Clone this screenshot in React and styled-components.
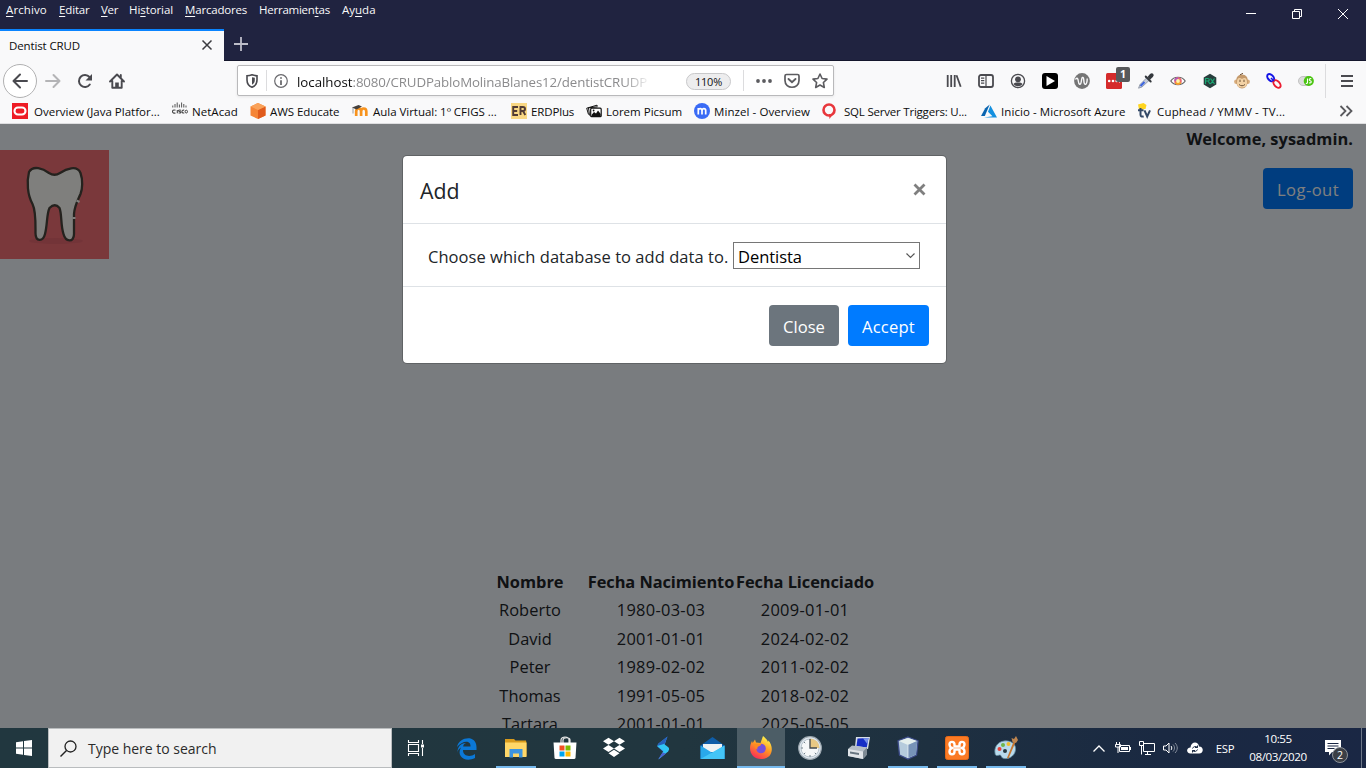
import React from 'react';
import styled, { createGlobalStyle, css } from 'styled-components';

const Global = createGlobalStyle`
  *, *::before, *::after { box-sizing: border-box; }
  body { margin: 0; overflow: hidden; font-family: "Open Sans", "Noto Sans", sans-serif; }
  svg { display: block; flex: none; overflow: visible; }
`;

const Screen = styled.div`
  display: flex; flex-direction: column; width: 1366px; height: 768px; overflow: hidden;
`;

/* ---------- browser title bar ---------- */
const TitleBar = styled.header`
  height: 61px; flex: none; background: #202340; display: flex; justify-content: space-between;
  border-bottom: 1px solid #14162c;
`;
const TitleLeft = styled.div`display: flex; flex-direction: column; justify-content: space-between;`;
const MenuBar = styled.nav`
  display: flex; height: 19px; padding-left: 6px; align-items: center; gap: 12px;
`;
const MenuItem = styled.span`
  width: ${p => p.$w}px; color: #f9f9fa; font-size: 11.5px; line-height: 16px; white-space: nowrap;
  letter-spacing: ${p => p.$ls || 0}px;
  u { text-underline-offset: 2px; text-decoration-thickness: 1px; text-decoration-skip-ink: none; }
`;
const Tabs = styled.div`display: flex; height: 32px; margin-bottom: -1px;`;
const Tab = styled.div`
  width: 224px; background: #f9f9fa; border-top: 2px solid #0a84ff; display: flex; align-items: center;
  justify-content: space-between; padding: 0 12px 2px 9px; font-size: 11.5px; letter-spacing: -0.13px; color: #0c0c0d;
`;
const NewTab = styled.div`width: 34px; display: flex; align-items: center; justify-content: center; padding-bottom: 2px;`;
const WindowButtons = styled.div`display: flex; height: 28px; align-items: center;`;
const WindowButton = styled.div`width: 46px; display: flex; justify-content: center;`;

/* ---------- navigation bar ---------- */
const NavBar = styled.div`
  height: 39px; flex: none; background: #f9f9fa; display: flex; align-items: center; padding-left: 3px;
`;
const NavButton = styled.div`
  width: ${p => p.$w || 32}px; height: 34px; display: flex; align-items: center; justify-content: center; flex: none;
  ${p => p.$round && css`width: 34px; border: 1px solid #b1b1b2; border-radius: 50%; background: #fff;`}
`;
const UrlBar = styled.div`
  margin-left: 104px; width: 597px; height: 31px; background: #fff; border: 1px solid #b9b9bb; border-radius: 2px;
  box-shadow: 0 1px 3px rgba(0,0,0,.08); display: flex; align-items: center; flex: none;
`;
const UrlIcon = styled.div`width: ${p => p.$w}px; display: flex; justify-content: center; flex: none;`;
const UrlRule = styled.div`width: 1px; height: 21px; background: #dcdcde; flex: none;`;
const UrlText = styled.div`
  width: 354px; overflow: hidden; white-space: nowrap; font-size: 13.3px; letter-spacing: -0.13px; color: #8b8b8d;
  padding-top: 2px; flex: none;
  mask-image: linear-gradient(to right, #000 326px, transparent 354px);
  b { font-weight: 400; color: #0c0c0d; letter-spacing: -0.02px; }
`;
const Zoom = styled.div`
  width: 45px; height: 17px; margin: 1px 12px 0 35px; border: 1px solid #c8c8ca; border-radius: 9px; background: #ededee;
  font-size: 11px; letter-spacing: -0.2px; line-height: 15px; text-align: center; color: #111; flex: none;
`;
const Extensions = styled.div`display: flex; align-items: center; margin-left: 104px;`;
const NavRule = styled.div`width: 1px; height: 34px; margin-left: 3px; background: #dcdcde;`;
const ExtensionIcon = styled(NavButton)`position: relative;`;
const ExtBadge = styled.span`
  position: absolute; right: 0; top: 3px; width: 14px; height: 15px; border-radius: 2px; background: #58595b;
  color: #fff; font-size: 10.5px; line-height: 14px; font-weight: 700; text-align: center;
`;

/* ---------- bookmarks ---------- */
const Bookmarks = styled.div`
  height: 24px; flex: none; background: #f9f9fa; border-bottom: 1px solid #dedee0; display: flex; align-items: center; padding: 0 0 1px 12px;
`;
const Bookmark = styled.div`
  width: ${p => p.$w}px; flex: none; display: flex; align-items: center; gap: ${p => p.$gap || 4}px; font-size: 11.5px;
  color: #0c0c0d; white-space: nowrap; letter-spacing: ${p => p.$ls || 0}px;
`;

/* ---------- page ---------- */
const Page = styled.main`
  position: relative; height: 604px; flex: none; overflow: hidden; background: #f2f8ff; color: #212529;
`;
const PageHeader = styled.div`display: flex; justify-content: space-between; height: 438px; padding-right: 13px;`;
const Logo = styled.div`
  width: 109px; height: 109px; margin-top: 26px; background: #f47077;
`;
const Account = styled.div`display: flex; flex-direction: column; align-items: flex-end;`;
const Welcome = styled.div`
  margin-top: 3px; height: 24px; line-height: 24px; font-weight: 700; font-size: 16.4px; letter-spacing: 0.02px; white-space: nowrap;
`;
const Button = styled.button`
  height: 41px; width: ${p => p.$w}px; padding: 2px 0 0; border: 0; border-radius: 4px; color: #fff; font-family: inherit; font-size: 16.6px;
  letter-spacing: ${p => p.$ls || 0}px; background: ${p => (p.$secondary ? '#6c757d' : '#007bff')}; text-align: center; white-space: nowrap;
`;
const LogoutSlot = styled.div`margin-top: 17px;`;
const Table = styled.div`display: grid; grid-template-columns: 112px 146px 138px; column-gap: 2px; margin: 6px 0 0 474px;`;
const Cell = styled.div`
  height: 28.4px; line-height: 28px; text-align: center; white-space: nowrap; font-size: 16.4px; display: flex; justify-content: center;
  font-weight: ${p => (p.$head ? 700 : 400)}; letter-spacing: ${p => p.$ls || 0}px;
`;
const Backdrop = styled.div`
  position: absolute; inset: 0; background: rgba(0,0,0,.5); display: flex; align-items: flex-start; padding: 31px 0 0 402px;
`;
const Modal = styled.section`
  width: 545px; height: 209px; background: #fff; background-clip: padding-box; border: 1px solid rgba(0,0,0,.2); border-radius: 5px;
`;
const ModalHeader = styled.div`
  height: 68px; border-bottom: 1px solid #dee2e6; display: flex; align-items: center; justify-content: space-between; padding: 0 20px 0 17px;
`;
const ModalTitle = styled.h5`margin: 0; padding-top: 2px; font-weight: 400; font-size: 21.3px; line-height: 30px;`;
const ModalBody = styled.div`
  height: 63px; border-bottom: 1px solid #dee2e6; display: flex; align-items: center; padding-left: 25px; font-size: 16.5px;
`;
const ModalLabel = styled.label`width: 305px; white-space: nowrap; padding-top: 2px; letter-spacing: 0.045px;`;
const Select = styled.div`
  width: 187px; height: 27px; border: 1px solid #767676; color: #000; display: flex; align-items: center; justify-content: space-between;
  padding: 2px 4px 0 4px; letter-spacing: -0.04px;
`;
const ModalFooter = styled.div`display: flex; justify-content: flex-end; gap: 9px; padding: 18px 17px 0 0;`;

/* ---------- taskbar ---------- */
const Taskbar = styled.footer`
  height: 40px; flex: none; display: flex; background: linear-gradient(90deg, #21373f 0%, #21363f 50%, #1e3040 68%, #1a2942 85%, #1a2744 100%);
`;
const Start = styled.div`width: 48px; display: flex; align-items: center; justify-content: center;`;
const Search = styled.div`
  width: 344px; background: #f1f1f1; border: 1px solid #b9bcbe; display: flex; align-items: center; gap: 11px; padding-left: 11px;
  font-size: 14px; letter-spacing: -0.02px; color: #2b2b2b;
`;
const Task = styled.div`
  width: 48px; margin-right: 1px; flex: none; display: flex; align-items: center; justify-content: center;
  background: ${p => (p.$active ? '#4c5d66' : 'transparent')};
  ${p => p.$active && css`box-shadow: inset 0 -2px 0 #76b9ed;`}
  ${p => p.$running && css`background: linear-gradient(#76b9ed, #76b9ed) center bottom / 40px 2px no-repeat;`}
`;
const TaskViewButton = styled(Task)`margin-right: 3px;`;
const Tray = styled.div`margin-left: auto; display: flex; align-items: center; color: #fff;`;
const TrayIcon = styled.div`width: ${p => p.$w || 24}px; display: flex; justify-content: center;`;
const Language = styled.div`width: 36px; text-align: center; font-size: 11.3px; letter-spacing: -0.3px;`;
const Clock = styled.div`width: 70px; text-align: center; font-size: 11.6px; letter-spacing: -0.4px; line-height: 18px; white-space: nowrap; padding-bottom: 1px;`;
const Notice = styled.div`position: relative; width: 48px; padding-right: 8px; display: flex; justify-content: center;`;
const NoticeBadge = styled.span`
  position: absolute; left: 19px; top: 7px; width: 16px; height: 16px; border-radius: 50%; border: 1px solid #8d939a; background: #3b3f46;
  font-size: 10.5px; line-height: 14px; text-align: center;
`;
const ShowDesktop = styled.div`width: 5px; height: 40px; border-left: 1px solid #6d7788;`;

const Svg = ({ s = 16, w, h, vb, children, ...rest }) => (
  <svg width={w || s} height={h || s} viewBox={vb || `0 0 ${w || s} ${h || s}`} fill="none" {...rest}>{children}</svg>
);
const ink = '#4a4a4f';

const extensions = [
  <Svg><path d="M1.700 2v12M5.200 2v12M8.700 2v12M10.500 2.200l4.200 11.600" stroke={ink} strokeWidth="1.800" /></Svg>,
  <Svg><rect x="1" y="2" width="14" height="12" rx="2" stroke={ink} strokeWidth="1.800" /><path d="M8 2v12M3 5.200h3.300M3 7.700h3.300M3 10.200h3.300" stroke={ink} strokeWidth="1.200" /></Svg>,
  <Svg><circle cx="8" cy="8" r="6.600" stroke={ink} strokeWidth="1.300" /><circle cx="8" cy="6.300" r="2.900" fill={ink} /><path d="M3.500 11c1-1.700 2.500-1.600 4.500-1.600s3.500-.1 4.500 1.600c-2 3-7 3-9 0z" fill={ink} /></Svg>,
  <Svg><rect width="16" height="16" rx="3" fill="#000" /><path d="M4.500 3l8.500 5-8.500 5z" fill="#fff" /></Svg>,
  <Svg><circle cx="8" cy="8" r="7.900" fill="#757575" /><path d="M1.500 6.500C3 4 4 5.500 4.300 8c.3 3.500 2.300 5 3 .5.400-3.500 1-4.500 1.700-4 1.200.5.500 4 1.300 5.800.8 2 2 1 2.500-1 .3-1.300.4-2 .4-3.800" stroke="#f9f9fa" strokeWidth="1.400" /></Svg>,
  <Svg><rect y="0" width="16" height="16" rx="1.500" fill="#d52b2b" /><circle cx="3.200" cy="8" r="1.300" fill="#fff" /><circle cx="7" cy="8" r="1.300" fill="#fff" /><circle cx="10.700" cy="8" r="1.300" fill="#fff" /><path d="M13.500 6.500v3" stroke="#fff" /></Svg>,
  <Svg><path d="M9 4.500L2 11.500l-1.500 3.700L4 14l7.500-7z" fill="#c4cbd9" stroke="#8890a0" strokeWidth=".8" /><path d="M6.500 9L2.500 13" stroke="#3f66e0" strokeWidth="2" /><path d="M7.700 3.500l5 5" stroke="#34383d" strokeWidth="1.900" strokeLinecap="round" /><path d="M9.500 4L12 1q2-1.500 3.300 0 1 1.500-.5 3L12 6.700z" fill="#34383d" /></Svg>,
  <Svg><path d="M.8 8C4 3 12 3 15.200 8 12 13 4 13 .8 8z" fill="#fff" stroke="#666" strokeWidth="1.200" /><circle cx="8" cy="8" r="3.800" fill="#ea6a72" /><path d="M8 8V4.200A3.800 3.800 0 0 0 4.200 8z" fill="#b35bb8" /><path d="M8 8l3.500 2A4 4 0 0 1 5 10.300z" fill="#f5a623" /><circle cx="8" cy="8" r="1.900" fill="#fff3a8" /></Svg>,
  <Svg><path d="M8 .8l6.300 3.600v7.200L8 15.200l-6.300-3.600V4.400z" fill="#283e3c" /><path d="M3.500 11V5.500h2.300c2 0 2 2.500 0 2.500H3.500M6 8l2 3M8.500 5.500l4 5.500M12.500 5.500l-4 5.500" stroke="#1ba873" strokeWidth="1.200" /></Svg>,
  <Svg><circle cx="2.300" cy="8.800" r="2.200" fill="#d9ad7c" /><circle cx="13.700" cy="8.800" r="2.200" fill="#d9ad7c" /><path d="M8 1.500c4 0 6 3 5.800 7-.2 4-2.500 7-5.800 7s-5.600-3-5.800-7C2 4.500 4 1.500 8 1.500z" fill="#c49a6c" /><path d="M3 9c0-5 3-4.500 5-3 2-1.500 5-2 5 3s-2 5.500-5 5.500S3 14 3 9z" fill="#f3d2a5" /><path d="M6 6.700v2.300M10 6.700v2.300M5 11.500c2 1.700 4 1.700 6 0M6 1.800L9 .3" stroke="#6f5439" strokeWidth="1" /></Svg>,
  <Svg><ellipse cx="4.700" cy="4.700" rx="2.700" ry="4.200" transform="rotate(-42 4.700 4.700)" stroke="#1414e6" strokeWidth="2" /><ellipse cx="11" cy="11" rx="2.700" ry="4.500" transform="rotate(-42 11 11)" stroke="#ec1d31" strokeWidth="2" /><path d="M5 5l3 3" stroke="#1414e6" strokeWidth="1.600" /></Svg>,
  <Svg><rect x=".5" y="3.500" width="14" height="9" rx="4.500" fill="#dcdcdc" stroke="#c2c2c2" /><circle cx="10.800" cy="8" r="5.100" fill="#4bc512" /><path d="M9.500 5.500v4c0 1-1 1-1.600.7M13.300 5.800c-2.500-.7-2.500 1.500-1 2 1.700.5 1 2.800-1.200 2" stroke="#fff" strokeWidth="1.100" /></Svg>,
];

const bookmarks = [
  { t: 'Overview (Java Platfor...', w: 160, gap: 6, ls: 0, i: <Svg><rect width="16" height="16" fill="#ee1c25" /><rect x="2.500" y="4.500" width="11" height="7" rx="3.500" stroke="#fff" strokeWidth="2.100" /></Svg> },
  { t: 'NetAcad', w: 78, ls: 0.05, i: <Svg><path d="M.8 2.500v2M3 1v3.500M5.200-.5v5M7.400 1.500v3M9.600-.5v5M11.800 1v3.500M14 2.500v2" stroke="#555" strokeWidth="1" /><path d="M3.500 7.300C1.300 6.300.5 7.800.5 8.500c0 1.500 1.500 2 3 1.400M5.300 7v3.200M9 7.300c-3-.8-3 1-1.300 1.200 2 .4 1 2-1 1.400M12.200 7.300c-3-1-3 3.500 0 2.600" stroke="#444" strokeWidth="1.100" /><ellipse cx="14.300" cy="8.600" rx="1.200" ry="1.400" stroke="#444" /></Svg> },
  { t: 'AWS Educate', w: 102, ls: -0.06, i: <Svg><path d="M8 0l7.500 3.500v9L8 16 .5 12.500v-9z" fill="#f58536" /><path d="M8 7l7.500-3.500v9L8 16z" fill="#e05b1c" /><path d="M8 0l7.500 3.500L8 7 .5 3.500z" fill="#f9a25a" /></Svg> },
  { t: 'Aula Virtual: 1º CFIGS ...', w: 159, gap: 5, ls: -0.03, i: <Svg><path d="M4.200 13V8.500c0-4 4.900-4 4.900 0V13M9.100 8.500c0-4 5.200-4 5.200 0V13" stroke="#f7931e" strokeWidth="2.700" /><path d="M0 4.500L6.500 2l3.500 1.500L4.500 6.500z" fill="#45403d" /><path d="M1 4.500v6" stroke="#777" strokeWidth=".7" /></Svg> },
  { t: 'ERDPlus', w: 75, ls: -0.15, i: <Svg><rect width="16" height="16" fill="#f8d784" /><path d="M7 4H2.200v8H7M2.200 8h4M9.500 12V4h2.300c3 0 3 4 0 4H9.500M12 8l2.300 4" stroke="#503b35" strokeWidth="1.900" /></Svg> },
  { t: 'Lorem Picsum', w: 108, ls: 0, i: <Svg><path d="M2.500 11.500L.7 5.200 11 2.200l.5 1" stroke="#111" strokeWidth="1" /><path d="M3.500 12.500L2.500 4.800l9-1" stroke="#111" strokeWidth="1" /><rect x="4.700" y="5.200" width="10.500" height="8.500" rx="1" fill="#fff" stroke="#111" strokeWidth="1.200" /><path d="M5.500 12l2.500-3 2 1.500 2-3 2.700 3.500v2H5.500z" fill="#111" /><circle cx="7.600" cy="7.500" r=".9" fill="#111" /></Svg> },
  { t: 'Minzel - Overview', w: 127, ls: 0.08, i: <Svg><circle cx="8" cy="8" r="8" fill="#3a6bf5" /><path d="M4.300 11.500V5M4.300 7.500c0-2.600 3.700-2.600 3.700 0v4M8 7.500c0-2.600 3.700-2.600 3.700 0v4" stroke="#fff" strokeWidth="1.700" /></Svg> },
  { t: 'SQL Server Triggers: U...', w: 160, gap: 7, ls: -0.21, i: <Svg><circle cx="8" cy="7" r="5.500" stroke="#e8373c" strokeWidth="2.600" /><path d="M8 11l.5 5 3.500-5z" fill="#e8373c" /></Svg> },
  { t: 'Inicio - Microsoft Azure', w: 156, ls: 0.07, i: <Svg><path d="M8.700 1.500L4.200 5.300 0 13h3.800z" fill="#0a65b0" /><path d="M9.400 2.500L7 8.700l4.500 4.600L3 14.500h13z" fill="#1490df" /></Svg> },
  { t: 'Cuphead / YMMV - TV...', w: 202, ls: 0.18, i: <Svg><path d="M1 1.500L6.500 0l3 2-1 4-6.500.5z" fill="#ffd51f" /><path d="M3.500 5v6.500c0 2 1 2.400 3.200 1.900M1 7.300h5.500M7.500 7.300l2.700 6.200 2.800-6.200" stroke="#344a68" strokeWidth="2" /></Svg> },
];

const tasks = [
  { o: 'running', i: <Svg w={22} h={20}><path d="M0 2.500V1h9l1.500 1.500H21l.5 2.500v13H0z" fill="#d99b1c" /><path d="M0 4.500h21.500V19H0z" fill="#ffd768" /><path d="M4.500 19.500V11h13v8.500H14V15.500H8v4z" fill="#3d94df" /></Svg> },
  { i: <Svg w={24} h={24}><path d="M8 7V4c0-4 8-4 8 0v3M10 7V4c0-3 7-3 7 0v3" stroke="#e8e8e8" strokeWidth="1.200" /><path d="M.5 6.500h23L22.500 22q-.2 1-1.500 1H3q-1.300 0-1.500-1z" fill="#fff" /><path d="M6.500 9.500h5v5h-5z" fill="#f25022" /><path d="M12.500 9.500h5v5h-5z" fill="#7fba00" /><path d="M6.500 15.500h5v5h-5z" fill="#00a4ef" /><path d="M12.500 15.500h5v5h-5z" fill="#ffb900" /></Svg> },
  { i: <Svg w={24} h={22}><path d="M6.500.8L12 4.300 6.500 7.800 1 4.300zM17.500.8L23 4.300l-5.500 3.500L12 4.300zM6.500 8l5.500 3.500L6.500 15 1 11.500zM17.500 8l5.500 3.500-5.500 3.500-5.500-3.500zM12 12.700l5.500 3.500L12 20l-5.500-3.800z" fill="#fff" /></Svg> },
  { i: <Svg w={14} h={24}><path d="M11.500.5L2.500 7.500Q.5 9.500 2.500 11.500l5 4.500h5L8 10.500z" fill="#3b8bea" /><path d="M11.500.5L2.500 7.500q-1.500 2 0 4L8.500 8z" fill="#245fbb" /><path d="M1 10l6.500 5-5 8.500 9-7.500q3-3 .5-5L8 8z" fill="#31c5f4" /><path d="M6.500 16.500l-4.500 7 8-6z" fill="#4c60cf" /></Svg> },
  { i: <Svg w={25} h={23}><path d="M.5 8.500L12.500 0l12 8.500V22H.5z" fill="#0f5da8" /><path d="M3 7h19v8H3z" fill="#eef2f4" /><path d="M.5 8.500L12.500 16l12-7.500V22H.5z" fill="#29a8ea" /><path d="M.5 22L24.500 8.500V22z" fill="#44c5f7" /></Svg> },
  { o: 'active', i: <Svg w={24} h={24}><defs><linearGradient id="fox" x1="18" y1="2" x2="6" y2="23" gradientUnits="userSpaceOnUse"><stop stopColor="#fff14a" /><stop offset=".45" stopColor="#ff9524" /><stop offset="1" stopColor="#fb245c" /></linearGradient></defs><path d="M1 12c0-3 1-5 2-7l.7 2L6 3.500 7 6.500l4.500.5L14 0c2 2 4 3 5 6l.5-1.500c6 7 4 18.500-7.500 18.500C5.500 23 1 18.500 1 12z" fill="url(#fox)" /><circle cx="12" cy="12.500" r="4.800" fill="#7650dc" /><path d="M5 8l6.500-.5c1 0 1 1.500-1 2.500-2 .5-2.500 1.500-2 3.500-1-.5-3.500-2-3.500-5.500z" fill="#ff8b20" /></Svg> },
  { i: <Svg w={24} h={24}><circle cx="12" cy="12" r="11.300" fill="#dce5ed" stroke="#9da8b0" strokeWidth="1.200" /><circle cx="12" cy="12" r="9" fill="#f6f8f9" stroke="#aebbc4" strokeWidth=".8" /><path d="M12 12V2.500A9.500 9.500 0 0 1 21.500 12z" fill="#e8c884" /><path d="M12 3v9h7" stroke="#40484f" strokeWidth="1.300" /><path d="M12 19v2M3 12h2M6 18l1.200-1.200M18 18l-1.200-1.200M6 6l1.200 1.200" stroke="#71808b" /></Svg> },
  { i: <Svg w={24} h={24}><path d="M9 1l14 0-2 12-13-2z" fill="#d7dfe7" /><path d="M10.500 2.500l11-.5-1.700 9.500L9.500 10z" fill="#162ec5" /><path d="M16 2.200l5.500-.2-1.200 6z" fill="#7893e8" /><path d="M1 13l4-3.500 15 2v7l-4 4.500-15-3z" fill="#b4bdc5" /><path d="M1 13l15 2.500V23L1 20z" fill="#e0e4e8" /><path d="M16 15.500l4-4v7L16 23z" fill="#7e8a94" /><path d="M3 15.500l9 1.500v2l-9-1.500z" fill="#677580" /></Svg> },
  { o: 'running', i: <Svg w={22} h={24}><path d="M11 1l10 4-1.500 14L11 23l-8.500-4L1 5z" fill="#b5cbdc" stroke="#3e4d8b" strokeWidth="1.300" /><path d="M1.800 5L11 2l9.200 3L11 9z" fill="#e4efed" /><path d="M11 9l9.200-4L19 18.500 11 22z" fill="#7793b7" /><path d="M11 9v13" stroke="#eff6f8" strokeWidth=".7" /></Svg> },
  { o: 'running', i: <Svg w={24} h={24}><rect x=".5" y=".5" width="23" height="23" rx="2" fill="#fb7a24" stroke="#e76a18" /><path d="M9.500 8.500C9.500 5 4.500 5 4.500 8.300c0 2 1.200 3.700 3 3.700-1.800 0-3 1.700-3 3.700 0 3.300 5 3.300 5 0V13.500h5v2.200c0 3.300 5 3.300 5 0 0-2-1.200-3.700-3-3.700 1.800 0 3-1.700 3-3.700 0-3.300-5-3.300-5 .2v2h-5z" stroke="#fff" strokeWidth="2.400" strokeLinejoin="round" /></Svg> },
  { o: 'running', i: <Svg w={24} h={24}><path d="M10 5C3 6 0 12 1 17c0 4 4 2 5 2s1 1.500 2.500 3c4 2 12-.5 13-8 1-6-5-10-11.500-9z" fill="#b9daec" stroke="#618a9e" strokeWidth=".8" /><circle cx="5.500" cy="13" r="2" fill="#e8413a" /><circle cx="9" cy="9" r="2" fill="#6db64b" /><circle cx="14.500" cy="8" r="2" fill="#f1bc2e" /><circle cx="11" cy="15" r="2" fill="#263941" /><path d="M20 4.500l-7 17.500 1.500.5L22 5z" fill="#c67831" /><path d="M17.500 2L20 3l2-3 2 4-2 3-3.500-1z" fill="#bd8550" /></Svg> },
];

const rows = [
  ['Roberto', '1980-03-03', '2009-01-01'], ['David', '2001-01-01', '2024-02-02'], ['Peter', '1989-02-02', '2011-02-02'],
  ['Thomas', '1991-05-05', '2018-02-02'], ['Tartara', '2001-01-01', '2025-05-05'],
];

export default function App() {
  return (
    <Screen>
      <Global />
      <TitleBar>
        <TitleLeft>
          <MenuBar>
            <MenuItem $w={41} $ls={0.1}><u>A</u>rchivo</MenuItem>
            <MenuItem $w={30} $ls={-0.15}><u>E</u>ditar</MenuItem>
            <MenuItem $w={16} $ls={-0.3}><u>V</u>er</MenuItem>
            <MenuItem $w={44} $ls={-0.08}>Hi<u>s</u>torial</MenuItem>
            <MenuItem $w={62} $ls={-0.18}><u>M</u>arcadores</MenuItem>
            <MenuItem $w={71} $ls={-0.24}>Herramien<u>t</u>as</MenuItem>
            <MenuItem $w={34}>Ay<u>u</u>da</MenuItem>
          </MenuBar>
          <Tabs>
            <Tab>Dentist CRUD<Svg s={10}><path d="M.5.5l9 9m0-9l-9 9" stroke="#3c3c40" strokeWidth="1.500" /></Svg></Tab>
            <NewTab><Svg s={14}><path d="M7 0v14M0 7h14" stroke="#bdbdc9" strokeWidth="1.800" /></Svg></NewTab>
          </Tabs>
        </TitleLeft>
        <WindowButtons>
          <WindowButton><Svg s={10}><path d="M0 4.500h10" stroke="#fff" /></Svg></WindowButton>
          <WindowButton><Svg s={10}><path d="M.5 2.500h7v7h-7zM2.500 2.500v-2h7v7h-2" stroke="#fff" /></Svg></WindowButton>
          <WindowButton><Svg s={10}><path d="M0 0l10 10M10 0L0 10" stroke="#fff" /></Svg></WindowButton>
        </WindowButtons>
      </TitleBar>

      <NavBar>
        <NavButton $round><Svg><path d="M15 8H1.500M8 1.500L1.500 8 8 14.500" stroke={ink} strokeWidth="2" strokeLinecap="round" strokeLinejoin="round" /></Svg></NavButton>
        <NavButton><Svg><path d="M1 8h13.500M8.500 2l6 6-6 6" stroke="#b4b4b6" strokeWidth="2" strokeLinecap="round" strokeLinejoin="round" /></Svg></NavButton>
        <NavButton><Svg><path d="M12.800 11.500A6 6 0 1 1 12.500 4" stroke={ink} strokeWidth="2" strokeLinecap="round" /><path d="M15 1v6.500H8.500z" fill={ink} /></Svg></NavButton>
        <NavButton><Svg><path d="M1 8.500l7-7 7 7M3.300 8v6.700h9.400V8M11.800 2v3" stroke={ink} strokeWidth="1.900" strokeLinecap="round" strokeLinejoin="round" /><path d="M6.200 14v-4.500h3.600V14z" fill={ink} /></Svg></NavButton>
        <UrlBar>
          <UrlIcon $w={28}><Svg w={12} h={14}><path d="M1 1.800Q3.500 1.600 6 .8q2.500.8 5 1V6c0 3.500-1.800 6-5 7.200C2.800 12 1 9.500 1 6z" stroke={ink} strokeWidth="1.600" /><path d="M6 3.200v7.500c2-1 2.800-2.500 2.800-4.700V3.800z" fill={ink} /></Svg></UrlIcon>
          <UrlRule />
          <UrlIcon $w={28}><Svg s={14}><circle cx="7" cy="7" r="6.300" stroke="#69696d" strokeWidth="1.200" /><path d="M7 6.200V11M7 3.200v1.500" stroke="#59595d" strokeWidth="1.600" /></Svg></UrlIcon>
          <UrlIcon $w={2} />
          <UrlText><b>localhost</b>:8080/CRUDPabloMolinaBlanes12/dentistCRUDP</UrlText>
          <Zoom>110%</Zoom>
          <UrlRule />
          <UrlIcon $w={40}><Svg w={16} h={4}><circle cx="2" cy="2" r="1.900" fill="#5c5c60" /><circle cx="8" cy="2" r="1.900" fill="#5c5c60" /><circle cx="14" cy="2" r="1.900" fill="#5c5c60" /></Svg></UrlIcon>
          <UrlIcon $w={16}><Svg><path d="M2.500 1.500h11q1.500 0 1.500 1.500v4.500c0 9-14 9-14 0V3q0-1.500 1.500-1.500z" stroke="#5c5c60" strokeWidth="1.700" /><path d="M4.500 6L8 9.300 11.500 6" stroke="#5c5c60" strokeWidth="1.900" strokeLinecap="round" /></Svg></UrlIcon>
          <UrlIcon $w={40}><Svg><path d="M8 1l2.100 4.500 4.900.6-3.600 3.400.9 5L8 12l-4.300 2.500.9-5L1 6.100l4.900-.6z" stroke="#5c5c60" strokeWidth="1.600" strokeLinejoin="round" /></Svg></UrlIcon>
        </UrlBar>
        <Extensions>
          {extensions.map((icon, i) => <ExtensionIcon key={i}>{icon}{i === 5 && <ExtBadge>1</ExtBadge>}</ExtensionIcon>)}
          <NavRule />
          <NavButton $w={41}><Svg w={12} h={12}><path d="M0 1h12M0 6h12M0 11h12" stroke={ink} strokeWidth="1.900" /></Svg></NavButton>
        </Extensions>
      </NavBar>

      <Bookmarks>
        {bookmarks.map(b => <Bookmark key={b.t} $w={b.w} $gap={b.gap} $ls={b.ls}>{b.i}{b.t}</Bookmark>)}
        <Svg w={14} h={12}><path d="M1.500 1l5 5-5 5M7.500 1l5 5-5 5" stroke="#5a5a5e" strokeWidth="1.800" /></Svg>
      </Bookmarks>

      <Page>
        <PageHeader>
          <Logo>
            <Svg s={109}>
              <ellipse cx="56" cy="91" rx="27" ry="3" fill="#e76870" />
              <path d="M29 22C33 15 43 18.500 49 23Q54.500 26.500 60 23C66 19 77 14.500 80.500 23c2.500 7 2 16 0 21-3 7-6 12-6.500 20v20c0 9-8.500 8-10.500 0-3-9-1.500-20-4-26q-4.500-5.500-10 0c-3 6-2 17-4.500 26-2 8-9.500 8-9.500-1 0-10 .5-22-3-29-5-9-6-22-3.500-32z" fill="#fffffa" stroke="#48443c" strokeWidth="2.300" />
              <path d="M76.500 50.500l3 1.500M72.500 68h3" stroke="#fffffa" strokeWidth="2" />
            </Svg>
          </Logo>
          <Account>
            <Welcome>Welcome, sysadmin.</Welcome>
            <LogoutSlot><Button $w={90} $ls={0.45}>Log-out</Button></LogoutSlot>
          </Account>
        </PageHeader>
        <Table>
          <Cell $head>Nombre</Cell><Cell $head $ls={-0.06}>Fecha Nacimiento</Cell><Cell $head $ls={-0.06}>Fecha Licenciado</Cell>
          {rows.flatMap((r, i) => r.map((c, j) => <Cell key={`${i}-${j}`} $ls={j ? 0.3 : 0.05}>{c}</Cell>))}
        </Table>
        <Backdrop>
          <Modal>
            <ModalHeader>
              <ModalTitle>Add</ModalTitle>
              <Svg w={13} h={12}><path d="M1.500 .5l10 10M11.500 .5l-10 10" stroke="#7f7f7f" strokeWidth="2.800" /></Svg>
            </ModalHeader>
            <ModalBody>
              <ModalLabel>Choose which database to add data to.</ModalLabel>
              <Select>Dentista<Svg w={9} h={6}><path d="M.5.5l4 4 4-4" stroke="#555" strokeWidth="1.200" /></Svg></Select>
            </ModalBody>
            <ModalFooter><Button $secondary $w={70}>Close</Button><Button $w={81} $ls={0.2}>Accept</Button></ModalFooter>
          </Modal>
        </Backdrop>
      </Page>

      <Taskbar>
        <Start><Svg><path d="M0 2.200L7 1.200V7.500H0zM8 1.100L16 0v7.500H8zM0 8.500h7v6.300l-7-1zM8 8.500h8V16l-8-1.100z" fill="#fff" /></Svg></Start>
        <Search><Svg w={17} h={17}><circle cx="10.500" cy="6.500" r="5.500" stroke="#222" strokeWidth="1.300" /><path d="M6.500 10.500L.5 16.500" stroke="#222" strokeWidth="1.400" /></Svg>Type here to search</Search>
        <TaskViewButton><Svg><path d="M.5 0v2.500h10V0M.5 16v-2.500h10V16M.5 4.500h10v7H.5zM14.500 0v4M14.500 8v8" stroke="#fff" strokeWidth="1.100" /><path d="M13 4.500h3v3h-3z" fill="#fff" /></Svg></TaskViewButton>
        <Task><Svg w={20} h={21}><path d="M0 9C2-1 19-4 19.500 9v3H6c0 7 8 7 12 4v4C8 25-1 18 4 9.500 1.500 11 .5 13 .5 15 .2 8 5 4.500 9 5 6.500 6 6.300 7.500 6.200 8.500h7.300C14 1.500 5 2.500 0 9z" fill="#0b78d7" /></Svg></Task>
        {tasks.map((t, i) => <Task key={i} $running={t.o === 'running'} $active={t.o === 'active'}>{t.i}</Task>)}
        <Tray>
          <TrayIcon><Svg w={12} h={7}><path d="M.5 6.500l5.500-5.500 5.500 5.500" stroke="#fff" strokeWidth="1.300" /></Svg></TrayIcon>
          <TrayIcon><Svg w={16} h={12}><path d="M4.500 3.500h10v6h-10zM15.500 5v3" stroke="#fff" /><path d="M6 5h7v3H6z" fill="#fff" /><path d="M1.500 0v2M4.500 0v2M.5 2.500h5v2.500h-5zM3 5v6" stroke="#fff" /></Svg></TrayIcon>
          <TrayIcon><Svg w={16} h={14}><path d="M4.500 2.500h11v8h-11zM8.500 10.500v3M6 13.500h6M.5.500h4v4h-4zM2.500 4.500v9" stroke="#fff" /></Svg></TrayIcon>
          <TrayIcon><Svg w={16} h={12}><path d="M.5 4h2.500l3-3v10L3 8H.5z" stroke="#fff" /><path d="M8 4c1 1 1 3 0 4" stroke="#fff" /><path d="M10 2.500c2 2 2 5 0 7M12 1c3 3 3 7 0 10" stroke="#87909e" /></Svg></TrayIcon>
          <TrayIcon><Svg w={16} h={12}><path d="M3.500 11.500c-4.500 0-4.500-6 0-6C4-1 11.500-1 12 4.500c5 0 5 7 0 7z" fill="#fff" /><path d="M5.500 6.500a3 3 0 0 1 5-1M10.500 3.500v2H8M10.500 7.500a3 3 0 0 1-5 1M5.500 10.500v-2H8" stroke="#1a2942" /></Svg></TrayIcon>
          <Language>ESP</Language>
          <Clock><div>10:55</div><div>08/03/2020</div></Clock>
          <Notice><Svg w={16} h={16}><path d="M0 0h16v12H7l-3 3.500V12H0z" fill="#fff" /><path d="M2.500 3.500h11M2.500 6h11M2.500 8.500h7" stroke="#1a2744" /></Svg><NoticeBadge>2</NoticeBadge></Notice>
          <ShowDesktop />
        </Tray>
      </Taskbar>
    </Screen>
  );
}
